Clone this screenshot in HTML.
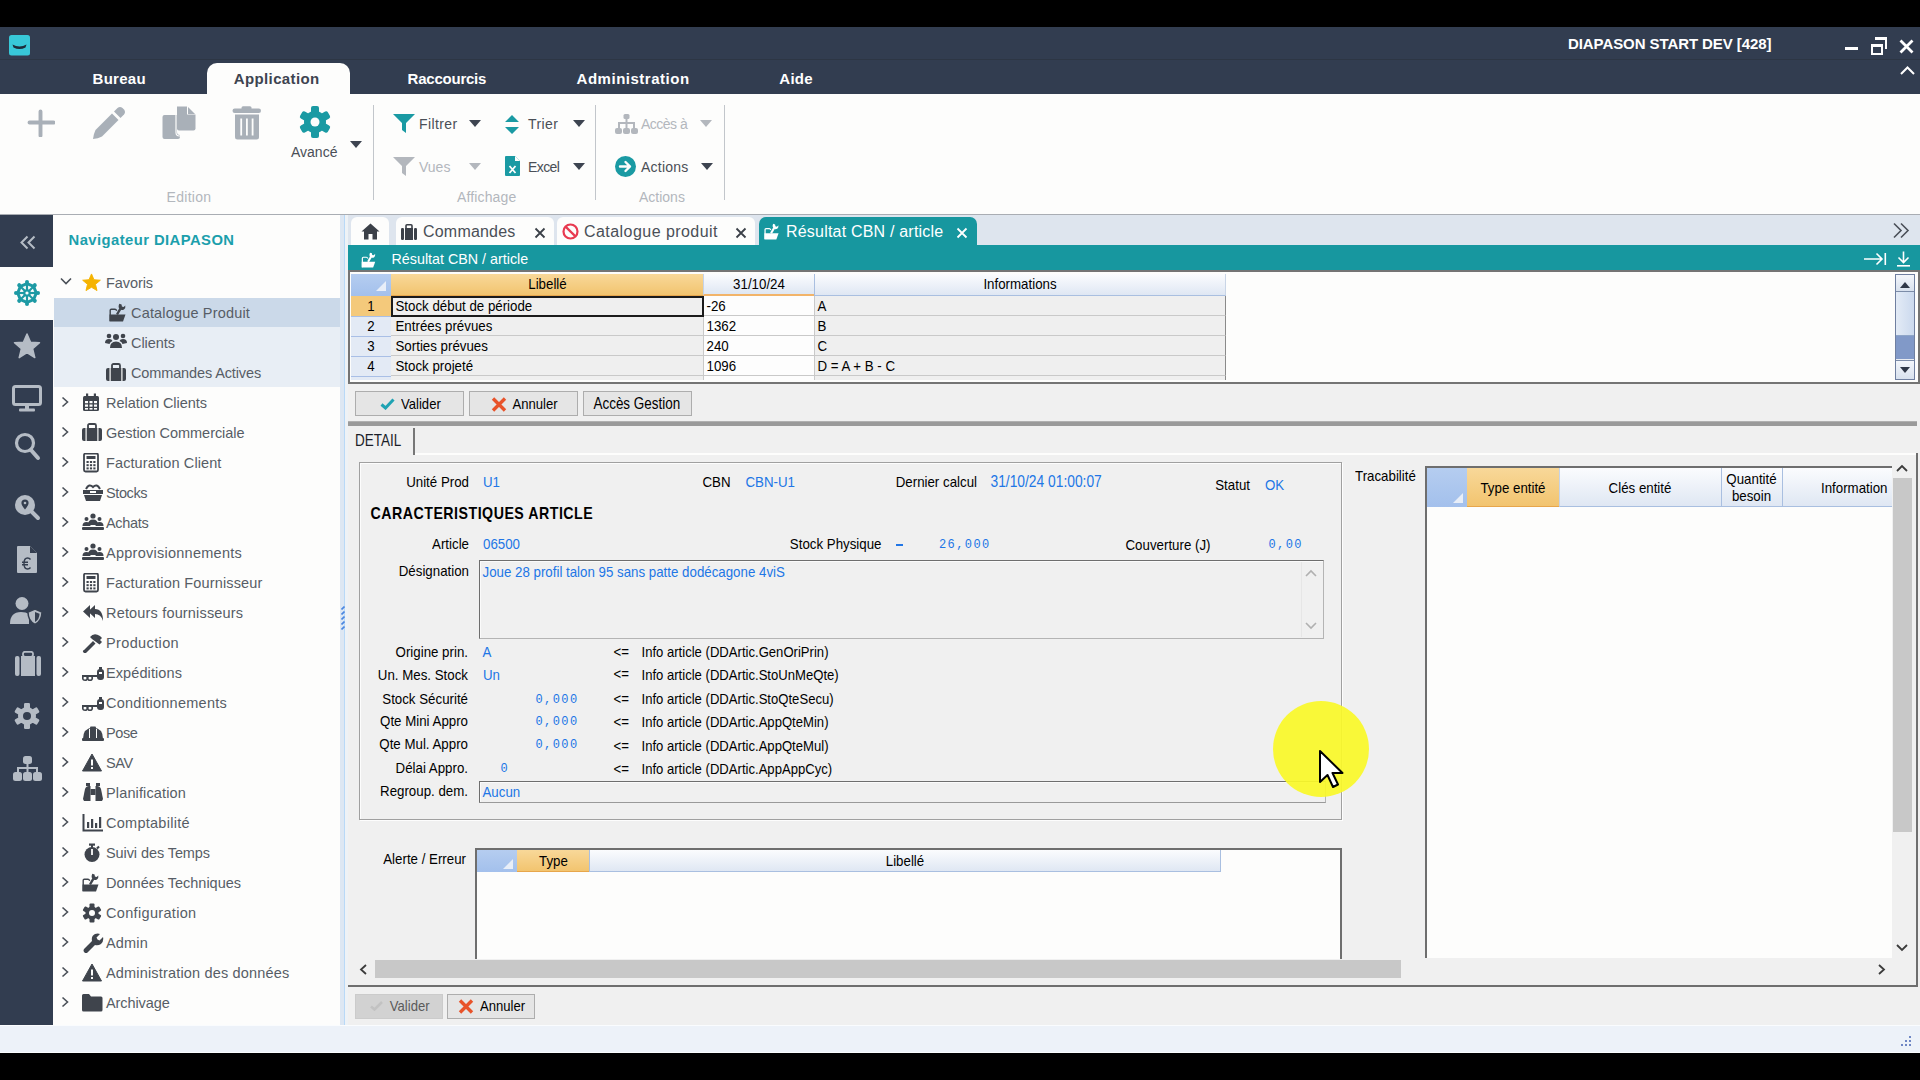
<!DOCTYPE html>
<html><head><meta charset="utf-8">
<style>
*{margin:0;padding:0;box-sizing:border-box}
html,body{width:1920px;height:1080px;overflow:hidden;background:#000;font-family:"Liberation Sans",sans-serif;position:relative}
.a{position:absolute}
.t{position:absolute;white-space:nowrap;line-height:1}
#title{left:0;top:27px;width:1920px;height:33px;background:#323d50;border-bottom:1px solid #2d3644}
#menu{left:0;top:60px;width:1920px;height:34px;background:#323d50}
.mt{color:#fff;font-weight:bold;font-size:15px;top:70.8px}
#ribbon{left:0;top:94px;width:1920px;height:120px;background:#fdfdfc}
.rb{color:#4a4f57;font-size:14px}
.rg{color:#b3b7bd;font-size:14px}
#sep1{left:0;top:214px;width:1920px;height:1px;background:#a9adb3}
#lbar{left:0;top:215px;width:53px;height:810px;background:#323d50}
#side{left:53px;top:215px;width:287px;height:810px;background:#fdfdfc}
#splitter{left:340px;top:215px;width:8px;height:810px;background:linear-gradient(90deg,#dde7f3 0,#dde7f3 4px,#b9d9f7 4px,#b9d9f7 5px,#eef2f6 5px)}
#status{left:0;top:1025px;width:1920px;height:28px;background:#edf2f9;border-top:1px solid #fafcfe;border-bottom:1px solid #fafcfe}
#bottom{left:0;top:1053px;width:1920px;height:27px;background:#000}
.si{color:#575d66;font-size:14.5px}
</style></head><body>
<div class="a" id="title"></div>
<svg class="a" style="left:9px;top:35px" width="21" height="21" viewBox="0 0 21 21"><rect x="0" y="0" width="21" height="20.5" rx="2.5" fill="#38c8d8"/><path d="M3.5 9.5 Q10.5 13.5 17.5 9.5 L16.5 12.5 Q10.5 15.5 4.5 12.5z" fill="#1d2c3a"/></svg>

<div class="t" style="left:1568px;top:35.5px;color:#fff;font-weight:bold;font-size:15px;letter-spacing:-0.08px">DIAPASON START DEV [428]</div>
<div class="a" id="menu"></div>
<div class="a" style="left:1845px;top:47px;width:13px;height:3px;background:#fff"></div>
<div class="a" style="left:1875px;top:37px;width:12px;height:12px;border-top:3px solid #fff;border-right:2px solid #fff"></div>
<div class="a" style="left:1871px;top:44px;width:12px;height:11px;border:2px solid #fff;border-top-width:3px;background:#323d50"></div>
<svg class="a" style="left:1899px;top:39px" width="15" height="15"><path d="M1.5 1.5L13.5 13.5M13.5 1.5L1.5 13.5" stroke="#fff" stroke-width="2.8"/></svg>
<svg class="a" style="left:1900px;top:65px" width="15" height="10"><path d="M1 9L7.5 2.5 14 9" stroke="#fff" stroke-width="2" fill="none"/></svg>

<div class="a" style="left:207px;top:63px;width:143px;height:31px;background:#fdfdfc;border-radius:10px 10px 0 0"></div>
<div class="t mt" style="left:92.5px;letter-spacing:0.3px">Bureau</div>
<div class="t mt" style="left:233.7px;color:#3d4450;letter-spacing:0.39px">Application</div>
<div class="t mt" style="left:407.6px;letter-spacing:-0.23px">Raccourcis</div>
<div class="t mt" style="left:576.6px;letter-spacing:0.51px">Administration</div>
<div class="t mt" style="left:779.3px;letter-spacing:0.27px">Aide</div>
<div class="a" id="ribbon"></div>

<!-- ribbon icons -->
<svg class="a" style="left:27px;top:109px" width="28" height="28" viewBox="0 0 28 28"><path d="M13.5 2.5v24M2.5 13.5h24" stroke="#a9b0b8" stroke-width="3.9" stroke-linecap="round"/></svg>
<svg class="a" style="left:92px;top:105px" width="34" height="35" viewBox="0 0 34 35"><path d="M3.5 25 L20 8.5 L26.5 15 L10 31.5 Q6 33.5 1 34 Q1.5 29 3.5 25Z" fill="#a9b0b8"/><path d="M22 6.5 L25.5 3 Q28 1 30.5 3 L32 4.5 Q34 7 32 9.5 L28.5 13 Z" fill="#a9b0b8"/></svg>
<svg class="a" style="left:162px;top:106px" width="34" height="34" viewBox="0 0 34 34"><path d="M0.5 11 Q0.5 9 2.5 9 H15 V26 Q15 29 18 29 V31 Q18 33 16 33 H2.5 Q0.5 33 0.5 31Z" fill="#a9b0b8"/><path d="M15 0.5 H25.5 L33.5 8 V22.5 Q33.5 24.5 31.5 24.5 H17 Q15 24.5 15 22.5 Z" fill="#a9b0b8"/><path d="M25 0 V8.5 H34 V0z" fill="#fdfdfc"/><path d="M26 1 L33 8 H26z" fill="#a9b0b8"/><path d="M14 9 V26.5 Q14 30 17.5 30 H18" fill="none" stroke="#fdfdfc" stroke-width="1.2"/></svg>
<svg class="a" style="left:232px;top:106px" width="30" height="34" viewBox="0 0 30 34"><rect x="0.5" y="2.5" width="28.5" height="4.5" rx="2.2" fill="#a9b0b8"/><rect x="9.5" y="0.3" width="10" height="4" rx="1.5" fill="#a9b0b8"/><path d="M3 8.5h24v22.5a2.5 2.5 0 0 1-2.5 2.5H5.5A2.5 2.5 0 0 1 3 31z" fill="#a9b0b8"/><rect x="8.3" y="12.5" width="1.8" height="17" fill="#fdfdfc"/><rect x="14" y="12.5" width="1.8" height="17" fill="#fdfdfc"/><rect x="19.7" y="12.5" width="1.8" height="17" fill="#fdfdfc"/></svg>
<svg class="a" style="left:298px;top:105px" width="34" height="34" viewBox="0 0 34 34"><g fill="#1a9aa3"><circle cx="17" cy="17" r="11"/><rect x="13" y="1" width="8" height="8" rx="2"/><rect x="13" y="25" width="8" height="8" rx="2"/><rect x="13" y="1" width="8" height="8" rx="2" transform="rotate(60 17 17)"/><rect x="13" y="1" width="8" height="8" rx="2" transform="rotate(120 17 17)"/><rect x="13" y="1" width="8" height="8" rx="2" transform="rotate(240 17 17)"/><rect x="13" y="1" width="8" height="8" rx="2" transform="rotate(300 17 17)"/></g><circle cx="17" cy="17" r="4.5" fill="#fdfdfc"/></svg>
<div class="t rb" style="left:291px;top:145px">Avancé</div>
<svg class="a" style="left:350px;top:141px" width="12" height="8"><path d="M0 0h12L6 7z" fill="#3d4450"/></svg>
<div class="a" style="left:373px;top:105px;width:1px;height:95px;background:#c2c6cb"></div>
<div class="t rg" style="left:166.5px;top:190px;letter-spacing:0.3px">Edition</div>

<svg class="a" style="left:393px;top:114px" width="22" height="19" viewBox="0 0 22 19"><path d="M0 0h22L13 9v10l-4-3V9z" fill="#1a9aa3"/></svg>
<div class="t rb" style="left:419px;top:116.5px;letter-spacing:0.4px">Filtrer</div>
<svg class="a" style="left:469px;top:120px" width="12" height="8"><path d="M0 0h12L6 7z" fill="#3d4450"/></svg>
<svg class="a" style="left:504px;top:115px" width="16" height="19" viewBox="0 0 16 19"><path d="M8 0L15 7H1z M8 19L15 12H1z" fill="#1a9aa3"/></svg>
<div class="t rb" style="left:528px;top:116.5px;letter-spacing:0.39px">Trier</div>
<svg class="a" style="left:573px;top:120px" width="12" height="8"><path d="M0 0h12L6 7z" fill="#3d4450"/></svg>
<div class="a" style="left:595px;top:105px;width:1px;height:95px;background:#c2c6cb"></div>
<svg class="a" style="left:615px;top:114px" width="23" height="20" viewBox="0 0 23 20"><g fill="#b3b7bd"><rect x="8.5" y="0" width="6" height="5" rx="1.5"/><rect x="10.5" y="5" width="2" height="4"/><rect x="3" y="8" width="17" height="2"/><rect x="3" y="9" width="2" height="5"/><rect x="18" y="9" width="2" height="5"/><rect x="10.5" y="9" width="2" height="5"/><rect x="0" y="14" width="7" height="6" rx="2"/><rect x="8" y="14" width="7" height="6" rx="2"/><rect x="16" y="14" width="7" height="6" rx="2"/></g></svg>
<div class="t rg" style="left:641px;top:116.5px;letter-spacing:-0.5px">Accès à</div>
<svg class="a" style="left:700px;top:120px" width="12" height="8"><path d="M0 0h12L6 7z" fill="#b3b7bd"/></svg>

<svg class="a" style="left:393px;top:157px" width="22" height="19" viewBox="0 0 22 19"><path d="M0 0h22L13 9v10l-4-3V9z" fill="#b3b7bd"/></svg>
<div class="t rg" style="left:419px;top:159.5px">Vues</div>
<svg class="a" style="left:469px;top:163px" width="12" height="8"><path d="M0 0h12L6 7z" fill="#b3b7bd"/></svg>
<svg class="a" style="left:505px;top:156px" width="15" height="20" viewBox="0 0 15 20"><path d="M0 1a1 1 0 0 1 1-1h9l5 5v14a1 1 0 0 1-1 1H1a1 1 0 0 1-1-1z" fill="#1a9aa3"/><path d="M10 0v5h5" fill="#fdfdfc"/><path d="M4.5 10l6 7M10.5 10l-6 7" stroke="#fdfdfc" stroke-width="1.8"/></svg>
<div class="t rb" style="left:528px;top:159.5px;letter-spacing:-0.6px">Excel</div>
<svg class="a" style="left:573px;top:163px" width="12" height="8"><path d="M0 0h12L6 7z" fill="#3d4450"/></svg>
<svg class="a" style="left:615px;top:156px" width="21" height="21" viewBox="0 0 21 21"><circle cx="10.5" cy="10.5" r="10.5" fill="#1a9aa3"/><path d="M5 10.5h10M10.5 6l4.5 4.5-4.5 4.5" stroke="#fdfdfc" stroke-width="2.4" fill="none" stroke-linecap="round" stroke-linejoin="round"/></svg>
<div class="t rb" style="left:641px;top:159.5px;letter-spacing:0.23px">Actions</div>
<svg class="a" style="left:701px;top:163px" width="12" height="8"><path d="M0 0h12L6 7z" fill="#3d4450"/></svg>
<div class="a" style="left:724px;top:105px;width:1px;height:95px;background:#c2c6cb"></div>
<div class="t rg" style="left:457px;top:190px;letter-spacing:0.14px">Affichage</div>
<div class="t rg" style="left:639px;top:190px">Actions</div>
<div class="a" id="sep1"></div>
<div class="a" id="lbar"></div>
<!--LBAR--><div class="a" style="left:0;top:267px;width:53px;height:53px;background:#fdfdfc"></div>
<svg class="a" style="left:19px;top:235px" width="18" height="15" viewBox="0 0 18 15"><path d="M8.5 1.5L2.5 7.5 8.5 13.5M15.5 1.5L9.5 7.5 15.5 13.5" stroke="#b5bcc5" stroke-width="2" fill="none"/></svg>
<svg class="a" style="left:14px;top:280px" width="26" height="26" viewBox="0 0 26 26"><g fill="#1d9aa4"><rect x="11.9" y="2" width="2.2" height="22" transform="rotate(0 13 13)"/><rect x="11.9" y="2" width="2.2" height="22" transform="rotate(45 13 13)"/><rect x="11.9" y="2" width="2.2" height="22" transform="rotate(90 13 13)"/><rect x="11.9" y="2" width="2.2" height="22" transform="rotate(135 13 13)"/><circle cx="13" cy="2" r="2" transform="rotate(0 13 13)"/><circle cx="13" cy="2" r="2" transform="rotate(45 13 13)"/><circle cx="13" cy="2" r="2" transform="rotate(90 13 13)"/><circle cx="13" cy="2" r="2" transform="rotate(135 13 13)"/><circle cx="13" cy="2" r="2" transform="rotate(180 13 13)"/><circle cx="13" cy="2" r="2" transform="rotate(225 13 13)"/><circle cx="13" cy="2" r="2" transform="rotate(270 13 13)"/><circle cx="13" cy="2" r="2" transform="rotate(315 13 13)"/></g><polygon points="13.00,3.70 19.58,6.42 22.30,13.00 19.58,19.58 13.00,22.30 6.42,19.58 3.70,13.00 6.42,6.42" fill="none" stroke="#1d9aa4" stroke-width="3" stroke-linejoin="round"/><circle cx="13" cy="13" r="3.8" fill="#1d9aa4"/><circle cx="13" cy="13" r="1.6" fill="#fdfdfc"/></svg>
<svg class="a" style="left:13px;top:333px" width="28" height="26" viewBox="0 0 28 26"><path d="M14 1 L17.6 9.2 L26.5 9.8 L19.6 15.6 L21.8 24.6 L14 19.7 L6.2 24.6 L8.4 15.6 L1.5 9.8 L10.4 9.2z" fill="#b5bcc5" stroke="#b5bcc5" stroke-width="1.5" stroke-linejoin="round"/></svg>
<svg class="a" style="left:12px;top:385px" width="30" height="27" viewBox="0 0 30 27"><rect x="1.5" y="1.5" width="27" height="18" rx="2" fill="none" stroke="#b5bcc5" stroke-width="3"/><rect x="13" y="20" width="4" height="4" fill="#b5bcc5"/><rect x="7" y="23.5" width="16" height="3" rx="1" fill="#b5bcc5"/></svg>
<svg class="a" style="left:14px;top:431px" width="27" height="32" viewBox="0 0 27 32"><circle cx="11" cy="12" r="8.5" fill="none" stroke="#b5bcc5" stroke-width="3.2"/><path d="M17 19 L24 27" stroke="#b5bcc5" stroke-width="4" stroke-linecap="round"/></svg>
<svg class="a" style="left:14px;top:494px" width="27" height="27" viewBox="0 0 27 27"><circle cx="11" cy="11" r="10" fill="#b5bcc5"/><path d="M17.5 17.5 L24 24" stroke="#b5bcc5" stroke-width="4" stroke-linecap="round"/><path d="M11 5.5 a3.6 3.6 0 0 1 3.6 3.6 Q14.6 11.5 11 15.5 Q7.4 11.5 7.4 9.1 a3.6 3.6 0 0 1 3.6-3.6z" fill="#343e4f"/><circle cx="11" cy="9" r="1.3" fill="#b5bcc5"/></svg>
<svg class="a" style="left:17px;top:546px" width="20" height="27" viewBox="0 0 20 27"><path d="M0 1 Q0 0 1 0 H13 L20 7 V26 Q20 27 19 27 H1 Q0 27 0 26z" fill="#b5bcc5"/><path d="M13 0 V7 H20" fill="#343e4f"/><path d="M13.5 13.5 Q12.5 12 10.5 12 Q7 12 7 17.5 Q7 23 10.5 23 Q12.5 23 13.5 21.5 M5 16.2 H11 M5 18.8 H11" stroke="#343e4f" stroke-width="1.4" fill="none"/></svg>
<svg class="a" style="left:10px;top:597px" width="33" height="28" viewBox="0 0 33 28"><circle cx="12" cy="6.5" r="6.5" fill="#b5bcc5"/><path d="M0 27 Q0 15 11 15 Q16 15 19 17 V27z" fill="#b5bcc5"/><path d="M25 12 L32 15 Q32 24 25 27.5 Q18 24 18 15z" fill="#b5bcc5" stroke="#343e4f" stroke-width="1.5"/><path d="M25 15 L29.5 16.8 Q29.5 22.5 25 25z" fill="#343e4f"/></svg>
<svg class="a" style="left:15px;top:651px" width="26" height="25" viewBox="0 0 26 25"><rect x="0" y="5" width="4.5" height="20" rx="2" fill="#b5bcc5"/><rect x="21.5" y="5" width="4.5" height="20" rx="2" fill="#b5bcc5"/><rect x="6" y="5" width="14" height="20" fill="#b5bcc5"/><rect x="8" y="0.8" width="10" height="5" rx="2" fill="none" stroke="#b5bcc5" stroke-width="1.8"/></svg>
<svg class="a" style="left:14px;top:703px" width="26" height="26" viewBox="0 0 26 26"><g fill="#b5bcc5"><circle cx="13" cy="13" r="9"/><rect x="10" y="0" width="6" height="6" rx="1.2" transform="rotate(0 13 13)"/><rect x="10" y="0" width="6" height="6" rx="1.2" transform="rotate(60 13 13)"/><rect x="10" y="0" width="6" height="6" rx="1.2" transform="rotate(120 13 13)"/><rect x="10" y="0" width="6" height="6" rx="1.2" transform="rotate(180 13 13)"/><rect x="10" y="0" width="6" height="6" rx="1.2" transform="rotate(240 13 13)"/><rect x="10" y="0" width="6" height="6" rx="1.2" transform="rotate(300 13 13)"/></g><circle cx="13" cy="13" r="4" fill="#343e4f"/></svg>
<svg class="a" style="left:13px;top:756px" width="29" height="25" viewBox="0 0 29 25"><g fill="#b5bcc5"><rect x="10" y="0" width="9" height="8" rx="2.5"/><rect x="13.5" y="7" width="2" height="5"/><rect x="4" y="11" width="21" height="2"/><rect x="4" y="11" width="2" height="6"/><rect x="23" y="11" width="2" height="6"/><rect x="13.5" y="11" width="2" height="6"/><rect x="0" y="16" width="9" height="9" rx="2.5"/><rect x="10" y="16" width="9" height="9" rx="2.5"/><rect x="20" y="16" width="9" height="9" rx="2.5"/></g></svg><!--/LBAR-->
<div class="a" id="side"></div>
<!--SIDE--><div class="t" style="left:68.5px;top:233.2px;color:#1b9fac;font-weight:bold;font-size:14.8px;letter-spacing:0.44px">Navigateur DIAPASON</div>
<svg class="a" style="left:60px;top:277px" width="12" height="8"><path d="M1 1.5L6 6.5 11 1.5" stroke="#4a5058" stroke-width="1.6" fill="none"/></svg>
<svg class="a" style="left:82px;top:273px" width="19" height="19" viewBox="0 0 20 19"><path d="M10 0.5 L12.6 6.6 L19.3 7.1 L14.2 11.4 L15.8 18 L10 14.5 L4.2 18 L5.8 11.4 L0.7 7.1 L7.4 6.6z" fill="#f5b300" stroke="#f5b300" stroke-width="1" stroke-linejoin="round"/></svg>
<div class="t si" style="left:106px;top:275.6px;letter-spacing:-0.077px">Favoris</div>
<div class="a" style="left:54px;top:298px;width:286px;height:29px;background:#cbd9e9"></div>
<div class="a" style="left:54px;top:327px;width:286px;height:60px;background:#e8eef5"></div>
<svg class="a" style="left:109px;top:303px" width="17" height="19" viewBox="0 0 17 19"><path d="M1.2 18 V7.3 Q1.2 6.2 2.3 6.2 H6 Q7 6.2 7.8 7.8" fill="none" stroke="#3f444c" stroke-width="1.4"/><path d="M0.5 11.5 H16.5 L14 18.5 H0.5 Z" fill="#3f444c"/><path d="M8 11.5 L11.3 5.8" stroke="#3f444c" stroke-width="2.4"/><path d="M10.3 0.8 Q8.8 4 10.6 6.2 Q12.6 7.6 15 6.4 Q16.8 5 16.3 2.5 L14.6 4 L12.9 3.5 L12.6 1.6 Z" fill="#3f444c"/></svg>
<div class="t si" style="left:131px;top:305.6px;letter-spacing:0.172px">Catalogue Produit</div>
<svg class="a" style="left:105px;top:333px" width="22" height="16" viewBox="0 0 22 16"><g fill="#3f444c"><circle cx="11" cy="4" r="3"/><path d="M5 15 Q5 8.5 11 8.5 Q17 8.5 17 15z"/><circle cx="4" cy="3" r="2.3"/><path d="M0 10 Q0 6 4 6 Q7 6 7.5 8 Q5 9 4.5 11z"/><circle cx="18" cy="3" r="2.3"/><path d="M22 10 Q22 6 18 6 Q15 6 14.5 8 Q17 9 17.5 11z"/></g></svg>
<div class="t si" style="left:131px;top:335.6px;letter-spacing:-0.046px">Clients</div>
<svg class="a" style="left:106px;top:363px" width="20" height="19" viewBox="0 0 20 19"><rect x="0" y="5" width="20" height="13" rx="2" fill="#3f444c"/><rect x="6" y="1" width="8" height="5" rx="1.5" fill="none" stroke="#3f444c" stroke-width="1.8"/><rect x="3.5" y="5" width="1.2" height="13" fill="#fdfdfc"/><rect x="15.3" y="5" width="1.2" height="13" fill="#fdfdfc"/></svg>
<div class="t si" style="left:131px;top:365.6px;letter-spacing:-0.127px">Commandes Actives</div>
<svg class="a" style="left:61px;top:396px" width="9" height="12"><path d="M1.5 1.5L6.5 6 1.5 10.5" stroke="#4a5058" stroke-width="1.6" fill="none"/></svg>
<svg class="a" style="left:82px;top:393px" width="22" height="20" viewBox="0 0 22 20"><rect x="1" y="3" width="16" height="15" rx="1.5" fill="#3f444c"/><rect x="4" y="0.5" width="2.2" height="4" fill="#3f444c"/><rect x="11.8" y="0.5" width="2.2" height="4" fill="#3f444c"/><g fill="#fdfdfc"><rect x="3" y="8" width="3" height="2.2"/><rect x="7.5" y="8" width="3" height="2.2"/><rect x="12" y="8" width="3" height="2.2"/><rect x="3" y="11.5" width="3" height="2.2"/><rect x="7.5" y="11.5" width="3" height="2.2"/><rect x="12" y="11.5" width="3" height="2.2"/><rect x="3" y="15" width="3" height="1.6"/><rect x="7.5" y="15" width="3" height="1.6"/><rect x="12" y="15" width="3" height="1.6"/></g></svg>
<div class="t si" style="left:106px;top:395.6px;letter-spacing:-0.034px">Relation Clients</div>
<svg class="a" style="left:61px;top:426px" width="9" height="12"><path d="M1.5 1.5L6.5 6 1.5 10.5" stroke="#4a5058" stroke-width="1.6" fill="none"/></svg>
<svg class="a" style="left:82px;top:423px" width="22" height="20" viewBox="0 0 22 20"><rect x="0" y="5" width="20" height="13" rx="2" fill="#3f444c"/><rect x="6" y="1" width="8" height="5" rx="1.5" fill="none" stroke="#3f444c" stroke-width="1.8"/><rect x="3.5" y="5" width="1.2" height="13" fill="#fdfdfc"/><rect x="15.3" y="5" width="1.2" height="13" fill="#fdfdfc"/></svg>
<div class="t si" style="left:106px;top:425.6px;letter-spacing:-0.048px">Gestion Commerciale</div>
<svg class="a" style="left:61px;top:456px" width="9" height="12"><path d="M1.5 1.5L6.5 6 1.5 10.5" stroke="#4a5058" stroke-width="1.6" fill="none"/></svg>
<svg class="a" style="left:82px;top:453px" width="22" height="20" viewBox="0 0 22 20"><rect x="2" y="0.5" width="14" height="18" rx="1.5" fill="none" stroke="#3f444c" stroke-width="1.8"/><rect x="4.5" y="3" width="9" height="3" fill="#3f444c"/><g fill="#3f444c"><rect x="4.5" y="8" width="2.2" height="2"/><rect x="7.9" y="8" width="2.2" height="2"/><rect x="11.3" y="8" width="2.2" height="2"/><rect x="4.5" y="11.2" width="2.2" height="2"/><rect x="7.9" y="11.2" width="2.2" height="2"/><rect x="11.3" y="11.2" width="2.2" height="2"/><rect x="4.5" y="14.4" width="2.2" height="2"/><rect x="7.9" y="14.4" width="2.2" height="2"/><rect x="11.3" y="14.4" width="2.2" height="2"/></g></svg>
<div class="t si" style="left:106px;top:455.6px;letter-spacing:0.104px">Facturation Client</div>
<svg class="a" style="left:61px;top:486px" width="9" height="12"><path d="M1.5 1.5L6.5 6 1.5 10.5" stroke="#4a5058" stroke-width="1.6" fill="none"/></svg>
<svg class="a" style="left:82px;top:483px" width="22" height="20" viewBox="0 0 22 20"><path d="M1 7h20v4H1z M2 12h18l-2 6H4z" fill="#3f444c"/><path d="M4 6 Q7 0 11 4 Q15 0 18 6" fill="none" stroke="#3f444c" stroke-width="2"/><rect x="8" y="8" width="6" height="2" fill="#fdfdfc"/></svg>
<div class="t si" style="left:106px;top:485.6px;letter-spacing:-0.4px">Stocks</div>
<svg class="a" style="left:61px;top:516px" width="9" height="12"><path d="M1.5 1.5L6.5 6 1.5 10.5" stroke="#4a5058" stroke-width="1.6" fill="none"/></svg>
<svg class="a" style="left:82px;top:513px" width="22" height="20" viewBox="0 0 22 20"><g fill="#3f444c"><circle cx="11" cy="3" r="2.6"/><path d="M6 12 Q6 6.5 11 6.5 Q16 6.5 16 12z"/><circle cx="4.5" cy="6" r="2"/><path d="M0.5 13 Q0.5 9 4.5 9 Q8.5 9 8.5 13z"/><circle cx="17.5" cy="6" r="2"/><path d="M13.5 13 Q13.5 9 17.5 9 Q21.5 9 21.5 13z"/><rect x="0" y="14" width="22" height="3" rx="1"/></g></svg>
<div class="t si" style="left:106px;top:515.6px;letter-spacing:-0.305px">Achats</div>
<svg class="a" style="left:61px;top:546px" width="9" height="12"><path d="M1.5 1.5L6.5 6 1.5 10.5" stroke="#4a5058" stroke-width="1.6" fill="none"/></svg>
<svg class="a" style="left:82px;top:543px" width="22" height="20" viewBox="0 0 22 20"><g fill="#3f444c"><circle cx="11" cy="3" r="2.6"/><path d="M6 12 Q6 6.5 11 6.5 Q16 6.5 16 12z"/><circle cx="4.5" cy="6" r="2"/><path d="M0.5 13 Q0.5 9 4.5 9 Q8.5 9 8.5 13z"/><circle cx="17.5" cy="6" r="2"/><path d="M13.5 13 Q13.5 9 17.5 9 Q21.5 9 21.5 13z"/><rect x="0" y="14" width="22" height="3" rx="1"/></g></svg>
<div class="t si" style="left:106px;top:545.6px;letter-spacing:0.257px">Approvisionnements</div>
<svg class="a" style="left:61px;top:576px" width="9" height="12"><path d="M1.5 1.5L6.5 6 1.5 10.5" stroke="#4a5058" stroke-width="1.6" fill="none"/></svg>
<svg class="a" style="left:82px;top:573px" width="22" height="20" viewBox="0 0 22 20"><rect x="2" y="0.5" width="14" height="18" rx="1.5" fill="none" stroke="#3f444c" stroke-width="1.8"/><rect x="4.5" y="3" width="9" height="3" fill="#3f444c"/><g fill="#3f444c"><rect x="4.5" y="8" width="2.2" height="2"/><rect x="7.9" y="8" width="2.2" height="2"/><rect x="11.3" y="8" width="2.2" height="2"/><rect x="4.5" y="11.2" width="2.2" height="2"/><rect x="7.9" y="11.2" width="2.2" height="2"/><rect x="11.3" y="11.2" width="2.2" height="2"/><rect x="4.5" y="14.4" width="2.2" height="2"/><rect x="7.9" y="14.4" width="2.2" height="2"/><rect x="11.3" y="14.4" width="2.2" height="2"/></g></svg>
<div class="t si" style="left:106px;top:575.6px;letter-spacing:0.147px">Facturation Fournisseur</div>
<svg class="a" style="left:61px;top:606px" width="9" height="12"><path d="M1.5 1.5L6.5 6 1.5 10.5" stroke="#4a5058" stroke-width="1.6" fill="none"/></svg>
<svg class="a" style="left:82px;top:603px" width="22" height="20" viewBox="0 0 22 20"><path d="M8 2 L1 8.5 L8 15 Z" fill="#3f444c"/><path d="M13 2 L6 8.5 L13 15 V11 Q19 11 21 18 Q21 6 13 6z" fill="#3f444c"/><path d="M8 2 L1 8.5 L8 15" fill="none" stroke="#fdfdfc" stroke-width="0"/></svg>
<div class="t si" style="left:106px;top:605.6px;letter-spacing:0.174px">Retours fournisseurs</div>
<svg class="a" style="left:61px;top:636px" width="9" height="12"><path d="M1.5 1.5L6.5 6 1.5 10.5" stroke="#4a5058" stroke-width="1.6" fill="none"/></svg>
<svg class="a" style="left:82px;top:633px" width="22" height="20" viewBox="0 0 22 20"><path d="M2 17 L11 8 L13.5 10.5 L4.5 19.5 Q3 21 1.5 19.5 Q0 18 2 17z" fill="#3f444c"/><path d="M8 4 Q12 -1 18 3 L20 5 L18 7 L20 9 L17.5 11.5 L10 6z" fill="#3f444c"/></svg>
<div class="t si" style="left:106px;top:635.6px;letter-spacing:0.368px">Production</div>
<svg class="a" style="left:61px;top:666px" width="9" height="12"><path d="M1.5 1.5L6.5 6 1.5 10.5" stroke="#4a5058" stroke-width="1.6" fill="none"/></svg>
<svg class="a" style="left:82px;top:663px" width="22" height="20" viewBox="0 0 22 20"><g fill="#3f444c"><rect x="0" y="12" width="18" height="2"/><circle cx="3" cy="15" r="2.3" fill="none" stroke="#3f444c" stroke-width="1.6"/><circle cx="8" cy="15" r="2.3" fill="none" stroke="#3f444c" stroke-width="1.6"/><rect x="15" y="6" width="7" height="11" rx="3"/><rect x="17" y="4" width="3" height="3"/></g><rect x="17" y="9" width="3" height="2" fill="#fdfdfc"/></svg>
<div class="t si" style="left:106px;top:665.6px;letter-spacing:0.094px">Expéditions</div>
<svg class="a" style="left:61px;top:696px" width="9" height="12"><path d="M1.5 1.5L6.5 6 1.5 10.5" stroke="#4a5058" stroke-width="1.6" fill="none"/></svg>
<svg class="a" style="left:82px;top:693px" width="22" height="20" viewBox="0 0 22 20"><g fill="#3f444c"><rect x="0" y="12" width="18" height="2"/><circle cx="3" cy="15" r="2.3" fill="none" stroke="#3f444c" stroke-width="1.6"/><circle cx="8" cy="15" r="2.3" fill="none" stroke="#3f444c" stroke-width="1.6"/><rect x="15" y="6" width="7" height="11" rx="3"/><rect x="17" y="4" width="3" height="3"/></g><rect x="17" y="9" width="3" height="2" fill="#fdfdfc"/></svg>
<div class="t si" style="left:106px;top:695.6px;letter-spacing:0.258px">Conditionnements</div>
<svg class="a" style="left:61px;top:726px" width="9" height="12"><path d="M1.5 1.5L6.5 6 1.5 10.5" stroke="#4a5058" stroke-width="1.6" fill="none"/></svg>
<svg class="a" style="left:82px;top:723px" width="22" height="20" viewBox="0 0 22 20"><path d="M1 16 Q1 5 11 4.5 Q21 5 21 16z" fill="#3f444c"/><rect x="0" y="15" width="22" height="3" rx="1" fill="#3f444c"/><rect x="8" y="3.5" width="6" height="6" rx="1" fill="#3f444c"/><rect x="7" y="6" width="1" height="9" fill="#fdfdfc"/><rect x="14" y="6" width="1" height="9" fill="#fdfdfc"/></svg>
<div class="t si" style="left:106px;top:725.6px;letter-spacing:-0.4px">Pose</div>
<svg class="a" style="left:61px;top:756px" width="9" height="12"><path d="M1.5 1.5L6.5 6 1.5 10.5" stroke="#4a5058" stroke-width="1.6" fill="none"/></svg>
<svg class="a" style="left:82px;top:753px" width="22" height="20" viewBox="0 0 22 20"><path d="M10 1 L19.5 18 H0.5z" fill="#3f444c" stroke="#3f444c" stroke-width="1" stroke-linejoin="round"/><rect x="9" y="6.5" width="2" height="6" fill="#fdfdfc"/><rect x="9" y="14" width="2" height="2" fill="#fdfdfc"/></svg>
<div class="t si" style="left:106px;top:755.6px;letter-spacing:-0.4px">SAV</div>
<svg class="a" style="left:61px;top:786px" width="9" height="12"><path d="M1.5 1.5L6.5 6 1.5 10.5" stroke="#4a5058" stroke-width="1.6" fill="none"/></svg>
<svg class="a" style="left:82px;top:783px" width="22" height="20" viewBox="0 0 22 20"><g fill="#3f444c"><path d="M1 16 L3 6 Q4 3 7 3 L8.5 3 L8.5 18 H2z"/><path d="M21 16 L19 6 Q18 3 15 3 L13.5 3 L13.5 18 H20z"/><rect x="8.5" y="6" width="5" height="6"/><rect x="4" y="0" width="4" height="3"/><rect x="14" y="0" width="4" height="3"/></g></svg>
<div class="t si" style="left:106px;top:785.6px;letter-spacing:0.14px">Planification</div>
<svg class="a" style="left:61px;top:816px" width="9" height="12"><path d="M1.5 1.5L6.5 6 1.5 10.5" stroke="#4a5058" stroke-width="1.6" fill="none"/></svg>
<svg class="a" style="left:82px;top:813px" width="22" height="20" viewBox="0 0 22 20"><path d="M1.5 1 V17.5 H21" fill="none" stroke="#3f444c" stroke-width="2"/><g fill="#3f444c"><rect x="5" y="9" width="2.2" height="6"/><rect x="9" y="6" width="2.2" height="9"/><rect x="13" y="10" width="2.2" height="5"/><rect x="17" y="4" width="2.2" height="11"/></g></svg>
<div class="t si" style="left:106px;top:815.6px;letter-spacing:0.267px">Comptabilité</div>
<svg class="a" style="left:61px;top:846px" width="9" height="12"><path d="M1.5 1.5L6.5 6 1.5 10.5" stroke="#4a5058" stroke-width="1.6" fill="none"/></svg>
<svg class="a" style="left:82px;top:843px" width="22" height="20" viewBox="0 0 22 20"><circle cx="10" cy="11.5" r="7.5" fill="#3f444c"/><rect x="7" y="0.5" width="6" height="2.2" fill="#3f444c"/><rect x="9" y="2" width="2" height="3" fill="#3f444c"/><rect x="15" y="3" width="2" height="3" transform="rotate(45 16 4.5)" fill="#3f444c"/><rect x="9.1" y="6" width="1.8" height="6" fill="#fdfdfc"/></svg>
<div class="t si" style="left:106px;top:845.6px;letter-spacing:-0.087px">Suivi des Temps</div>
<svg class="a" style="left:61px;top:876px" width="9" height="12"><path d="M1.5 1.5L6.5 6 1.5 10.5" stroke="#4a5058" stroke-width="1.6" fill="none"/></svg>
<svg class="a" style="left:82px;top:873px" width="17" height="19" viewBox="0 0 17 19"><path d="M1.2 18 V7.3 Q1.2 6.2 2.3 6.2 H6 Q7 6.2 7.8 7.8" fill="none" stroke="#3f444c" stroke-width="1.4"/><path d="M0.5 11.5 H16.5 L14 18.5 H0.5 Z" fill="#3f444c"/><path d="M8 11.5 L11.3 5.8" stroke="#3f444c" stroke-width="2.4"/><path d="M10.3 0.8 Q8.8 4 10.6 6.2 Q12.6 7.6 15 6.4 Q16.8 5 16.3 2.5 L14.6 4 L12.9 3.5 L12.6 1.6 Z" fill="#3f444c"/></svg>
<div class="t si" style="left:106px;top:875.6px;letter-spacing:-0.009px">Données Techniques</div>
<svg class="a" style="left:61px;top:906px" width="9" height="12"><path d="M1.5 1.5L6.5 6 1.5 10.5" stroke="#4a5058" stroke-width="1.6" fill="none"/></svg>
<svg class="a" style="left:82px;top:903px" width="22" height="20" viewBox="0 0 22 20"><g fill="#3f444c"><circle cx="10" cy="10" r="6.5"/><rect x="7.5" y="0.5" width="5" height="5" rx="1"/><rect x="7.5" y="14.5" width="5" height="5" rx="1"/><rect x="7.5" y="0.5" width="5" height="5" rx="1" transform="rotate(60 10 10)"/><rect x="7.5" y="0.5" width="5" height="5" rx="1" transform="rotate(120 10 10)"/><rect x="7.5" y="0.5" width="5" height="5" rx="1" transform="rotate(240 10 10)"/><rect x="7.5" y="0.5" width="5" height="5" rx="1" transform="rotate(300 10 10)"/></g><circle cx="10" cy="10" r="3" fill="#fdfdfc"/></svg>
<div class="t si" style="left:106px;top:905.6px;letter-spacing:0.327px">Configuration</div>
<svg class="a" style="left:61px;top:936px" width="9" height="12"><path d="M1.5 1.5L6.5 6 1.5 10.5" stroke="#4a5058" stroke-width="1.6" fill="none"/></svg>
<svg class="a" style="left:82px;top:933px" width="22" height="20" viewBox="0 0 22 20"><path d="M2.5 19.5 Q0.5 17.5 2.5 15.5 L10 8 Q9 3 13 1 Q16 0 18 1 L14.5 4.5 L15.5 6.5 L17.5 7.5 L21 4 Q22 8 19 11 Q16 13 13 12 L5.5 19.5 Q4 21 2.5 19.5z" fill="#3f444c"/></svg>
<div class="t si" style="left:106px;top:935.6px;letter-spacing:0.18px">Admin</div>
<svg class="a" style="left:61px;top:966px" width="9" height="12"><path d="M1.5 1.5L6.5 6 1.5 10.5" stroke="#4a5058" stroke-width="1.6" fill="none"/></svg>
<svg class="a" style="left:82px;top:963px" width="22" height="20" viewBox="0 0 22 20"><path d="M10 1 L19.5 18 H0.5z" fill="#3f444c" stroke="#3f444c" stroke-width="1" stroke-linejoin="round"/><rect x="9" y="6.5" width="2" height="6" fill="#fdfdfc"/><rect x="9" y="14" width="2" height="2" fill="#fdfdfc"/></svg>
<div class="t si" style="left:106px;top:965.6px;letter-spacing:0.172px">Administration des données</div>
<svg class="a" style="left:61px;top:996px" width="9" height="12"><path d="M1.5 1.5L6.5 6 1.5 10.5" stroke="#4a5058" stroke-width="1.6" fill="none"/></svg>
<svg class="a" style="left:82px;top:993px" width="22" height="20" viewBox="0 0 22 20"><path d="M0 2.5 Q0 1 1.5 1 H7 L9 3.5 H19 Q20.5 3.5 20.5 5 V17 Q20.5 18.5 19 18.5 H1.5 Q0 18.5 0 17z" fill="#3f444c"/></svg>
<div class="t si" style="left:106px;top:995.6px;letter-spacing:-0.098px">Archivage</div><!--/SIDE-->
<div class="a" id="splitter"></div>
<svg class="a" style="left:341px;top:606px" width="4" height="4"><path d="M0.5 3.5L3.5 0.5" stroke="#4a86e0" stroke-width="1.6"/></svg><svg class="a" style="left:341px;top:611px" width="4" height="4"><path d="M0.5 3.5L3.5 0.5" stroke="#4a86e0" stroke-width="1.6"/></svg><svg class="a" style="left:341px;top:616px" width="4" height="4"><path d="M0.5 3.5L3.5 0.5" stroke="#4a86e0" stroke-width="1.6"/></svg><svg class="a" style="left:341px;top:621px" width="4" height="4"><path d="M0.5 3.5L3.5 0.5" stroke="#4a86e0" stroke-width="1.6"/></svg><svg class="a" style="left:341px;top:626px" width="4" height="4"><path d="M0.5 3.5L3.5 0.5" stroke="#4a86e0" stroke-width="1.6"/></svg>
<!--MAIN--><div class="a" style="left:348px;top:215px;width:1572px;height:810px;background:#f0f0f0"></div>
<div class="a" style="left:348px;top:215px;width:1572px;height:30px;background:#dee5ee"></div>
<div class="a" style="left:351px;top:217px;width:38px;height:28px;background:#fdfdfc;border-radius:6px 6px 0 0"></div>
<svg class="a" style="left:361px;top:223px" width="19" height="17" viewBox="0 0 19 17"><path d="M9.5 0.5 L18.5 8.5 H16 V16.5 H11.5 V11 H7.5 V16.5 H3 V8.5 H0.5z" fill="#3b4048"/></svg>
<div class="a" style="left:396px;top:217px;width:158px;height:28px;background:#fdfdfc;border-radius:6px 6px 0 0"></div>
<svg class="a" style="left:401px;top:224px" width="16" height="16" viewBox="0 0 16 16"><rect x="0" y="4" width="3" height="12" rx="1.2" fill="#3b4048"/><rect x="13" y="4" width="3" height="12" rx="1.2" fill="#3b4048"/><rect x="4" y="4" width="8" height="12" fill="#3b4048"/><rect x="5" y="0.8" width="6" height="4" rx="1" fill="none" stroke="#3b4048" stroke-width="1.6"/></svg>
<div class="t" style="left:423px;top:223.96px;font-size:16px;color:#4a4f57;font-family:'Liberation Sans',sans-serif;letter-spacing:0.2px;">Commandes</div>
<svg class="a" style="left:534px;top:227px" width="12" height="12"><path d="M1.5 1.5L10.5 10.5M10.5 1.5L1.5 10.5" stroke="#3b4048" stroke-width="1.8"/></svg>
<div class="a" style="left:557px;top:217px;width:198px;height:28px;background:#fdfdfc;border-radius:6px 6px 0 0"></div>
<svg class="a" style="left:562px;top:223px" width="17" height="17" viewBox="0 0 17 17"><circle cx="8.5" cy="8.5" r="7" fill="none" stroke="#e83a50" stroke-width="2.2"/><path d="M3.6 3.6 L13.4 13.4" stroke="#e83a50" stroke-width="2.2"/></svg>
<div class="t" style="left:584px;top:223.96px;font-size:16px;color:#4a4f57;font-family:'Liberation Sans',sans-serif;letter-spacing:0.45px;">Catalogue produit</div>
<svg class="a" style="left:735px;top:227px" width="12" height="12"><path d="M1.5 1.5L10.5 10.5M10.5 1.5L1.5 10.5" stroke="#3b4048" stroke-width="1.8"/></svg>
<div class="a" style="left:759px;top:217px;width:218px;height:28px;background:#17979f;border-radius:7px 7px 0 0"></div>
<svg class="a" style="left:764px;top:223px" width="15" height="17" viewBox="0 0 17 19"><path d="M1.2 18 V7.3 Q1.2 6.2 2.3 6.2 H6 Q7 6.2 7.8 7.8" fill="none" stroke="#fff" stroke-width="1.4"/><path d="M0.5 11.5 H16.5 L14 18.5 H0.5 Z" fill="#fff"/><path d="M8 11.5 L11.3 5.8" stroke="#fff" stroke-width="2.4"/><path d="M10.3 0.8 Q8.8 4 10.6 6.2 Q12.6 7.6 15 6.4 Q16.8 5 16.3 2.5 L14.6 4 L12.9 3.5 L12.6 1.6 Z" fill="#fff"/></svg>
<div class="t" style="left:786px;top:223.96px;font-size:16px;color:#fff;font-family:'Liberation Sans',sans-serif;letter-spacing:0.2px;">Résultat CBN / article</div>
<svg class="a" style="left:956px;top:227px" width="12" height="12"><path d="M1.5 1.5L10.5 10.5M10.5 1.5L1.5 10.5" stroke="#fff" stroke-width="1.8"/></svg>
<svg class="a" style="left:1892px;top:222px" width="19" height="17" viewBox="0 0 19 17"><path d="M2 1.5L9 8.5 2 15.5M9 1.5L16 8.5 9 15.5" stroke="#4a5058" stroke-width="1.6" fill="none"/></svg>
<div class="a" style="left:348px;top:245px;width:1572px;height:25px;background:#17979f"></div>
<svg class="a" style="left:361px;top:252px" width="15" height="16" viewBox="0 0 17 19"><path d="M1.2 18 V7.3 Q1.2 6.2 2.3 6.2 H6 Q7 6.2 7.8 7.8" fill="none" stroke="#fff" stroke-width="1.4"/><path d="M0.5 11.5 H16.5 L14 18.5 H0.5 Z" fill="#fff"/><path d="M8 11.5 L11.3 5.8" stroke="#fff" stroke-width="2.4"/><path d="M10.3 0.8 Q8.8 4 10.6 6.2 Q12.6 7.6 15 6.4 Q16.8 5 16.3 2.5 L14.6 4 L12.9 3.5 L12.6 1.6 Z" fill="#fff"/></svg>
<div class="t" style="left:391.5px;top:251.90px;font-size:14.3px;color:#fff;font-family:'Liberation Sans',sans-serif;;">Résultat CBN / article</div>
<svg class="a" style="left:1864px;top:252px" width="23" height="14" viewBox="0 0 23 14"><path d="M0 7H18M12.5 1.5L18 7 12.5 12.5" stroke="#fff" stroke-width="1.6" fill="none"/><rect x="20.5" y="1" width="1.6" height="12" fill="#fff"/></svg>
<svg class="a" style="left:1896px;top:251px" width="15" height="16" viewBox="0 0 15 16"><path d="M7.5 0.5V11M2.5 6.5L7.5 11.5 12.5 6.5" stroke="#fff" stroke-width="1.6" fill="none"/><rect x="1" y="14" width="13" height="1.6" fill="#fff"/></svg>
<div class="a" style="left:348px;top:270px;width:1572px;height:114px;background:#fdfdfc;border:2px solid #747474;box-shadow:inset -2px 0 0 #fdfdfc"></div>
<div class="a" style="left:351px;top:274px;width:40px;height:22px;background:linear-gradient(#b5cdf0,#a3c0ec)"></div>
<svg class="a" style="left:375px;top:280px" width="12" height="12"><path d="M11 1V11H1z" fill="#e8eef8"/></svg>
<div class="a" style="left:391px;top:274px;width:312px;height:22px;background:linear-gradient(#f8d899,#f2c46f);border-bottom:1px solid #e7a64b"></div>
<div class="t" style="left:547.5px;top:278.24px;font-size:13.3px;color:#000;font-family:'Liberation Sans',sans-serif;;transform:translateX(-50%) scaleY(1.17);transform-origin:50% 11.26px;">Libellé</div>
<div class="a" style="left:703px;top:274px;width:111px;height:22px;background:linear-gradient(#fbfcfe,#dfe7f3);border-left:1px solid #c5d3e8;border-bottom:2px solid #f2b46a"></div>
<div class="t" style="left:759px;top:278.24px;font-size:13.3px;color:#000;font-family:'Liberation Sans',sans-serif;;transform:translateX(-50%) scaleY(1.17);transform-origin:50% 11.26px;">31/10/24</div>
<div class="a" style="left:814px;top:274px;width:412px;height:22px;background:linear-gradient(#fbfcfe,#dfe7f3);border-left:1px solid #a9bfe0;border-bottom:1px solid #a9bfe0;border-right:1px solid #c9d5e6"></div>
<div class="t" style="left:1020px;top:278.24px;font-size:13.3px;color:#000;font-family:'Liberation Sans',sans-serif;;transform:translateX(-50%) scaleY(1.17);transform-origin:50% 11.26px;">Informations</div>
<div class="a" style="left:351px;top:296px;width:40px;height:20px;background:#f4c97b"></div>
<div class="a" style="left:391px;top:296px;width:312px;height:20px;background:#efefef;border-bottom:1px solid #c9c9c9"></div>
<div class="a" style="left:703px;top:296px;width:111px;height:20px;background:#fdfdfd;border-left:1px solid #c9c9c9;border-bottom:1px solid #c9c9c9"></div>
<div class="a" style="left:814px;top:296px;width:412px;height:20px;background:#efefef;border-left:1px solid #c9c9c9;border-bottom:1px solid #c9c9c9;border-right:1px solid #8a8a8a"></div>
<div class="t" style="left:371px;top:300.24px;font-size:13.3px;color:#000;font-family:'Liberation Sans',sans-serif;;transform:translateX(-50%) scaleY(1.17);transform-origin:50% 11.26px;">1</div>
<div class="t" style="left:395.5px;top:299.74px;font-size:13.3px;color:#000;font-family:'Liberation Sans',sans-serif;;transform:scaleY(1.17);transform-origin:50% 11.26px;">Stock début de période</div>
<div class="t" style="left:706.5px;top:299.74px;font-size:13.3px;color:#000;font-family:'Liberation Sans',sans-serif;;transform:scaleY(1.17);transform-origin:50% 11.26px;">-26</div>
<div class="t" style="left:817.5px;top:299.74px;font-size:13.3px;color:#000;font-family:'Liberation Sans',sans-serif;;transform:scaleY(1.17);transform-origin:50% 11.26px;">A</div>
<div class="a" style="left:351px;top:316px;width:40px;height:20px;background:#e3eaf5;border-top:1px solid #a9bfe6"></div>
<div class="a" style="left:391px;top:316px;width:312px;height:20px;background:#efefef;border-bottom:1px solid #c9c9c9"></div>
<div class="a" style="left:703px;top:316px;width:111px;height:20px;background:#fdfdfd;border-left:1px solid #c9c9c9;border-bottom:1px solid #c9c9c9"></div>
<div class="a" style="left:814px;top:316px;width:412px;height:20px;background:#efefef;border-left:1px solid #c9c9c9;border-bottom:1px solid #c9c9c9;border-right:1px solid #8a8a8a"></div>
<div class="t" style="left:371px;top:320.24px;font-size:13.3px;color:#000;font-family:'Liberation Sans',sans-serif;;transform:translateX(-50%) scaleY(1.17);transform-origin:50% 11.26px;">2</div>
<div class="t" style="left:395.5px;top:319.74px;font-size:13.3px;color:#000;font-family:'Liberation Sans',sans-serif;;transform:scaleY(1.17);transform-origin:50% 11.26px;">Entrées prévues</div>
<div class="t" style="left:706.5px;top:319.74px;font-size:13.3px;color:#000;font-family:'Liberation Sans',sans-serif;;transform:scaleY(1.17);transform-origin:50% 11.26px;">1362</div>
<div class="t" style="left:817.5px;top:319.74px;font-size:13.3px;color:#000;font-family:'Liberation Sans',sans-serif;;transform:scaleY(1.17);transform-origin:50% 11.26px;">B</div>
<div class="a" style="left:351px;top:336px;width:40px;height:20px;background:#e3eaf5;border-top:1px solid #a9bfe6"></div>
<div class="a" style="left:391px;top:336px;width:312px;height:20px;background:#efefef;border-bottom:1px solid #c9c9c9"></div>
<div class="a" style="left:703px;top:336px;width:111px;height:20px;background:#fdfdfd;border-left:1px solid #c9c9c9;border-bottom:1px solid #c9c9c9"></div>
<div class="a" style="left:814px;top:336px;width:412px;height:20px;background:#efefef;border-left:1px solid #c9c9c9;border-bottom:1px solid #c9c9c9;border-right:1px solid #8a8a8a"></div>
<div class="t" style="left:371px;top:340.24px;font-size:13.3px;color:#000;font-family:'Liberation Sans',sans-serif;;transform:translateX(-50%) scaleY(1.17);transform-origin:50% 11.26px;">3</div>
<div class="t" style="left:395.5px;top:339.74px;font-size:13.3px;color:#000;font-family:'Liberation Sans',sans-serif;;transform:scaleY(1.17);transform-origin:50% 11.26px;">Sorties prévues</div>
<div class="t" style="left:706.5px;top:339.74px;font-size:13.3px;color:#000;font-family:'Liberation Sans',sans-serif;;transform:scaleY(1.17);transform-origin:50% 11.26px;">240</div>
<div class="t" style="left:817.5px;top:339.74px;font-size:13.3px;color:#000;font-family:'Liberation Sans',sans-serif;;transform:scaleY(1.17);transform-origin:50% 11.26px;">C</div>
<div class="a" style="left:351px;top:356px;width:40px;height:20px;background:#e3eaf5;border-top:1px solid #a9bfe6"></div>
<div class="a" style="left:391px;top:356px;width:312px;height:20px;background:#efefef;border-bottom:1px solid #c9c9c9"></div>
<div class="a" style="left:703px;top:356px;width:111px;height:20px;background:#fdfdfd;border-left:1px solid #c9c9c9;border-bottom:1px solid #c9c9c9"></div>
<div class="a" style="left:814px;top:356px;width:412px;height:20px;background:#efefef;border-left:1px solid #c9c9c9;border-bottom:1px solid #c9c9c9;border-right:1px solid #8a8a8a"></div>
<div class="t" style="left:371px;top:360.24px;font-size:13.3px;color:#000;font-family:'Liberation Sans',sans-serif;;transform:translateX(-50%) scaleY(1.17);transform-origin:50% 11.26px;">4</div>
<div class="t" style="left:395.5px;top:359.74px;font-size:13.3px;color:#000;font-family:'Liberation Sans',sans-serif;;transform:scaleY(1.17);transform-origin:50% 11.26px;">Stock projeté</div>
<div class="t" style="left:706.5px;top:359.74px;font-size:13.3px;color:#000;font-family:'Liberation Sans',sans-serif;;transform:scaleY(1.17);transform-origin:50% 11.26px;">1096</div>
<div class="t" style="left:817.5px;top:359.74px;font-size:13.3px;color:#000;font-family:'Liberation Sans',sans-serif;;transform:scaleY(1.17);transform-origin:50% 11.26px;">D = A + B - C</div>
<div class="a" style="left:351px;top:376px;width:40px;height:4px;background:#e3eaf5;border-top:1px solid #a9bfe6"></div>
<div class="a" style="left:391px;top:376px;width:312px;height:4px;background:#efefef"></div>
<div class="a" style="left:703px;top:376px;width:111px;height:4px;background:#fdfdfd;border-left:1px solid #c9c9c9"></div>
<div class="a" style="left:814px;top:376px;width:412px;height:4px;background:#efefef;border-left:1px solid #c9c9c9;border-right:1px solid #8a8a8a"></div>
<div class="a" style="left:391px;top:296px;width:313px;height:21px;border:2px solid #1b1b1b"></div>
<div class="a" style="left:1895px;top:274px;width:20px;height:106px;background:#e9ecf2;border:1px solid #6f7fa0"></div>
<div class="a" style="left:1896px;top:275px;width:18px;height:17px;background:linear-gradient(#f3f6fb,#d8e1ee);border-bottom:1px solid #7c8ca8"></div>
<svg class="a" style="left:1900px;top:282px" width="10" height="6"><path d="M0 6L5 0 10 6z" fill="#2f3848"/></svg>
<div class="a" style="left:1896px;top:292px;width:18px;height:44px;background:linear-gradient(90deg,#e3ebf6,#cbd9ee);border-bottom:1px solid #8ea5c8"></div>
<div class="a" style="left:1896px;top:336px;width:18px;height:23px;background:#8199c8"></div>
<div class="a" style="left:1896px;top:360px;width:18px;height:19px;background:linear-gradient(#f3f6fb,#d8e1ee);border-top:1px solid #7c8ca8"></div>
<svg class="a" style="left:1900px;top:367px" width="10" height="6"><path d="M0 0L5 6 10 0z" fill="#2f3848"/></svg>
<div class="a" style="left:355px;top:391px;width:109px;height:25px;background:#e5e5e5;border:1px solid #adadad"></div>
<svg class="a" style="left:380px;top:398px" width="15" height="12" viewBox="0 0 15 12"><path d="M1.5 6.5L5.5 10 13.5 1.5" stroke="#1fa3b3" stroke-width="3" fill="none"/></svg>
<div class="t" style="left:401px;top:397.91px;font-size:13.1px;color:#000;font-family:'Liberation Sans',sans-serif;;transform:scaleY(1.17);transform-origin:50% 11.09px;">Valider</div>
<div class="a" style="left:469px;top:391px;width:109px;height:25px;background:#e5e5e5;border:1px solid #adadad"></div>
<svg class="a" style="left:491px;top:397px" width="16" height="15" viewBox="0 0 16 15"><path d="M2 1.5L14 13.5M14 1.5L2 13.5" stroke="#e8532a" stroke-width="3.4"/></svg>
<div class="t" style="left:512.5px;top:397.91px;font-size:13.1px;color:#000;font-family:'Liberation Sans',sans-serif;;transform:scaleY(1.17);transform-origin:50% 11.09px;">Annuler</div>
<div class="a" style="left:583px;top:391px;width:109px;height:25px;background:#e5e5e5;border:1px solid #adadad"></div>
<div class="t" style="left:593.5px;top:397.61px;font-size:13.45px;color:#000;font-family:'Liberation Sans',sans-serif;;transform:scaleY(1.17);transform-origin:50% 11.39px;">Accès Gestion</div>
<div class="a" style="left:348px;top:421px;width:1569px;height:5px;background:#9a9a9a;border-top:1px solid #b0b0b0"></div>
<div class="a" style="left:348px;top:426px;width:67px;height:29px;background:#f0f0f0"></div>
<div class="a" style="left:413px;top:428px;width:2px;height:27px;background:#777"></div>
<div class="a" style="left:415px;top:453px;width:1503px;height:2px;background:#fdfdfc"></div>
<div class="t" style="left:355px;top:434.57px;font-size:13.5px;color:#1b1e29;font-family:'Liberation Sans',sans-serif;;transform:scaleY(1.17);transform-origin:50% 11.43px;">DETAIL</div>
<div class="a" style="left:359px;top:462px;width:983px;height:358px;border:1px solid #a0a0a0;box-shadow:inset 1px 1px 0 #fdfdfd, 1px 1px 0 #fdfdfd"></div>
<div class="t" style="right:1451px;top:476.24px;font-size:13.3px;color:#000;font-family:'Liberation Sans',sans-serif;;transform:scaleY(1.17);transform-origin:50% 11.26px;">Unité Prod</div>
<div class="t" style="left:483px;top:476.24px;font-size:13.3px;color:#2176e6;font-family:'Liberation Sans',sans-serif;;transform:scaleY(1.17);transform-origin:50% 11.26px;">U1</div>
<div class="t" style="right:1189.5px;top:476.24px;font-size:13.3px;color:#000;font-family:'Liberation Sans',sans-serif;;transform:scaleY(1.17);transform-origin:50% 11.26px;">CBN</div>
<div class="t" style="left:745.5px;top:476.24px;font-size:13.3px;color:#2176e6;font-family:'Liberation Sans',sans-serif;;transform:scaleY(1.17);transform-origin:50% 11.26px;">CBN-U1</div>
<div class="t" style="right:943px;top:476.24px;font-size:13.3px;color:#000;font-family:'Liberation Sans',sans-serif;;transform:scaleY(1.17);transform-origin:50% 11.26px;">Dernier calcul</div>
<div class="t" style="left:990.5px;top:475.82px;font-size:13.8px;color:#2176e6;font-family:'Liberation Sans',sans-serif;;transform:scaleY(1.17);transform-origin:50% 11.68px;">31/10/24 01:00:07</div>
<div class="t" style="right:670px;top:478.74px;font-size:13.3px;color:#000;font-family:'Liberation Sans',sans-serif;;transform:scaleY(1.17);transform-origin:50% 11.26px;">Statut</div>
<div class="t" style="left:1265px;top:478.74px;font-size:13.3px;color:#2176e6;font-family:'Liberation Sans',sans-serif;;transform:scaleY(1.17);transform-origin:50% 11.26px;">OK</div>
<div class="t" style="left:370.5px;top:506.73px;font-size:14.2px;color:#000;font-family:'Liberation Sans',sans-serif;font-weight:bold;letter-spacing:0.5px;transform:scaleY(1.1);transform-origin:50% 12.02px;">CARACTERISTIQUES ARTICLE</div>
<div class="t" style="right:1451px;top:538.24px;font-size:13.3px;color:#000;font-family:'Liberation Sans',sans-serif;;transform:scaleY(1.17);transform-origin:50% 11.26px;">Article</div>
<div class="t" style="left:483px;top:538.24px;font-size:13.3px;color:#2176e6;font-family:'Liberation Sans',sans-serif;;transform:scaleY(1.17);transform-origin:50% 11.26px;">06500</div>
<div class="t" style="right:1038.5px;top:538.44px;font-size:13.3px;color:#000;font-family:'Liberation Sans',sans-serif;;transform:scaleY(1.17);transform-origin:50% 11.26px;">Stock Physique</div>
<div class="a" style="left:896px;top:544px;width:7px;height:2px;background:#2176e6"></div>
<div class="t" style="left:939px;top:539.31px;font-size:12px;color:#2176e6;font-family:'Liberation Mono',monospace;letter-spacing:1.4px;transform:scaleY(1.14);transform-origin:50% 9.19px;">26,000</div>
<div class="t" style="right:709.5px;top:539.04px;font-size:13.3px;color:#000;font-family:'Liberation Sans',sans-serif;;transform:scaleY(1.17);transform-origin:50% 11.26px;">Couverture (J)</div>
<div class="t" style="left:1268.5px;top:539.31px;font-size:12px;color:#2176e6;font-family:'Liberation Mono',monospace;letter-spacing:1.4px;transform:scaleY(1.14);transform-origin:50% 9.19px;">0,00</div>
<div class="t" style="right:1451px;top:564.74px;font-size:13.3px;color:#000;font-family:'Liberation Sans',sans-serif;;transform:scaleY(1.17);transform-origin:50% 11.26px;">Désignation</div>
<div class="a" style="left:479px;top:560px;width:845px;height:79px;background:#f0f0f0;border:1px solid #6e6e6e;border-right-color:#b4b4b4;border-bottom-color:#b4b4b4;box-shadow:inset 1px 1px 0 #fbfbfb"></div>
<div class="a" style="left:1301px;top:562px;width:21px;height:75px;background:#f0f0f0;border-left:1px solid #e6e6e6"></div>
<svg class="a" style="left:1305px;top:569px" width="12" height="8"><path d="M1 7L6 2 11 7" stroke="#b0b0b0" stroke-width="1.6" fill="none"/></svg>
<svg class="a" style="left:1305px;top:622px" width="12" height="8"><path d="M1 1L6 6 11 1" stroke="#b0b0b0" stroke-width="1.6" fill="none"/></svg>
<div class="t" style="left:482.5px;top:565.74px;font-size:13.3px;color:#2176e6;font-family:'Liberation Sans',sans-serif;;transform:scaleY(1.17);transform-origin:50% 11.26px;">Joue 28 profil talon 95 sans patte dodécagone 4viS</div>
<div class="t" style="right:1452px;top:646.14px;font-size:13.3px;color:#000;font-family:'Liberation Sans',sans-serif;;transform:scaleY(1.17);transform-origin:50% 11.26px;">Origine prin.</div>
<div class="t" style="right:1452px;top:669.14px;font-size:13.3px;color:#000;font-family:'Liberation Sans',sans-serif;;transform:scaleY(1.17);transform-origin:50% 11.26px;">Un. Mes. Stock</div>
<div class="t" style="right:1452px;top:693.14px;font-size:13.3px;color:#000;font-family:'Liberation Sans',sans-serif;;transform:scaleY(1.17);transform-origin:50% 11.26px;">Stock Sécurité</div>
<div class="t" style="right:1452px;top:714.74px;font-size:13.3px;color:#000;font-family:'Liberation Sans',sans-serif;;transform:scaleY(1.17);transform-origin:50% 11.26px;">Qte Mini Appro</div>
<div class="t" style="right:1452px;top:738.14px;font-size:13.3px;color:#000;font-family:'Liberation Sans',sans-serif;;transform:scaleY(1.17);transform-origin:50% 11.26px;">Qte Mul. Appro</div>
<div class="t" style="right:1452px;top:762.24px;font-size:13.3px;color:#000;font-family:'Liberation Sans',sans-serif;;transform:scaleY(1.17);transform-origin:50% 11.26px;">Délai Appro.</div>
<div class="t" style="right:1452px;top:785.44px;font-size:13.3px;color:#000;font-family:'Liberation Sans',sans-serif;;transform:scaleY(1.17);transform-origin:50% 11.26px;">Regroup. dem.</div>
<div class="t" style="left:482.5px;top:646.14px;font-size:13.3px;color:#2176e6;font-family:'Liberation Sans',sans-serif;;transform:scaleY(1.17);transform-origin:50% 11.26px;">A</div>
<div class="t" style="left:483px;top:669.14px;font-size:13.3px;color:#2176e6;font-family:'Liberation Sans',sans-serif;;transform:scaleY(1.17);transform-origin:50% 11.26px;">Un</div>
<div class="t" style="left:535.5px;top:694.31px;font-size:12px;color:#2176e6;font-family:'Liberation Mono',monospace;letter-spacing:1.4px;transform:scaleY(1.14);transform-origin:50% 9.19px;">0,000</div>
<div class="t" style="left:535.5px;top:715.81px;font-size:12px;color:#2176e6;font-family:'Liberation Mono',monospace;letter-spacing:1.4px;transform:scaleY(1.14);transform-origin:50% 9.19px;">0,000</div>
<div class="t" style="left:535.5px;top:739.31px;font-size:12px;color:#2176e6;font-family:'Liberation Mono',monospace;letter-spacing:1.4px;transform:scaleY(1.14);transform-origin:50% 9.19px;">0,000</div>
<div class="t" style="left:500.5px;top:763.11px;font-size:12px;color:#2176e6;font-family:'Liberation Mono',monospace;;transform:scaleY(1.14);transform-origin:50% 9.19px;">0</div>
<div class="t" style="left:613.5px;top:645.64px;font-size:13.3px;color:#000;font-family:'Liberation Sans',sans-serif;;transform:scaleY(1.17);transform-origin:50% 11.26px;">&lt;=</div>
<div class="t" style="left:641.5px;top:645.81px;font-size:13.1px;color:#000;font-family:'Liberation Sans',sans-serif;;transform:scaleY(1.17);transform-origin:50% 11.09px;">Info article (DDArtic.GenOriPrin)</div>
<div class="t" style="left:613.5px;top:668.34px;font-size:13.3px;color:#000;font-family:'Liberation Sans',sans-serif;;transform:scaleY(1.17);transform-origin:50% 11.26px;">&lt;=</div>
<div class="t" style="left:641.5px;top:668.51px;font-size:13.1px;color:#000;font-family:'Liberation Sans',sans-serif;;transform:scaleY(1.17);transform-origin:50% 11.09px;">Info article (DDArtic.StoUnMeQte)</div>
<div class="t" style="left:613.5px;top:692.74px;font-size:13.3px;color:#000;font-family:'Liberation Sans',sans-serif;;transform:scaleY(1.17);transform-origin:50% 11.26px;">&lt;=</div>
<div class="t" style="left:641.5px;top:692.91px;font-size:13.1px;color:#000;font-family:'Liberation Sans',sans-serif;;transform:scaleY(1.17);transform-origin:50% 11.09px;">Info article (DDArtic.StoQteSecu)</div>
<div class="t" style="left:613.5px;top:715.94px;font-size:13.3px;color:#000;font-family:'Liberation Sans',sans-serif;;transform:scaleY(1.17);transform-origin:50% 11.26px;">&lt;=</div>
<div class="t" style="left:641.5px;top:716.11px;font-size:13.1px;color:#000;font-family:'Liberation Sans',sans-serif;;transform:scaleY(1.17);transform-origin:50% 11.09px;">Info article (DDArtic.AppQteMin)</div>
<div class="t" style="left:613.5px;top:740.04px;font-size:13.3px;color:#000;font-family:'Liberation Sans',sans-serif;;transform:scaleY(1.17);transform-origin:50% 11.26px;">&lt;=</div>
<div class="t" style="left:641.5px;top:740.21px;font-size:13.1px;color:#000;font-family:'Liberation Sans',sans-serif;;transform:scaleY(1.17);transform-origin:50% 11.09px;">Info article (DDArtic.AppQteMul)</div>
<div class="t" style="left:613.5px;top:763.14px;font-size:13.3px;color:#000;font-family:'Liberation Sans',sans-serif;;transform:scaleY(1.17);transform-origin:50% 11.26px;">&lt;=</div>
<div class="t" style="left:641.5px;top:763.31px;font-size:13.1px;color:#000;font-family:'Liberation Sans',sans-serif;;transform:scaleY(1.17);transform-origin:50% 11.09px;">Info article (DDArtic.AppAppCyc)</div>
<div class="a" style="left:479px;top:781px;width:847px;height:22px;background:#f0f0f0;border:1px solid #6e6e6e;border-right-color:#b4b4b4;border-bottom-color:#9a9a9a;box-shadow:inset 1px 1px 0 #fbfbfb"></div>
<div class="t" style="left:482.5px;top:785.74px;font-size:13.3px;color:#2176e6;font-family:'Liberation Sans',sans-serif;;transform:scaleY(1.17);transform-origin:50% 11.26px;">Aucun</div>
<div class="t" style="left:1355px;top:470.44px;font-size:13.3px;color:#000;font-family:'Liberation Sans',sans-serif;;transform:scaleY(1.17);transform-origin:50% 11.26px;">Tracabilité</div>
<div class="a" style="left:1425px;top:466px;width:470px;height:492px;background:#fdfdfc;border-left:2px solid #6e6e6e;border-top:2px solid #6e6e6e"></div>
<div class="a" style="left:1427px;top:468px;width:40px;height:39px;background:linear-gradient(#b5cdf0,#a3c0ec)"></div>
<svg class="a" style="left:1452px;top:492px" width="12" height="12"><path d="M11 1V11H1z" fill="#e8eef8"/></svg>
<div class="a" style="left:1467px;top:468px;width:92px;height:39px;background:linear-gradient(#f8d899,#f2c46f);border-bottom:1px solid #e7a64b"></div>
<div class="t" style="left:1513px;top:482.24px;font-size:13.3px;color:#000;font-family:'Liberation Sans',sans-serif;;transform:translateX(-50%) scaleY(1.17);transform-origin:50% 11.26px;">Type entité</div>
<div class="a" style="left:1559px;top:468px;width:162px;height:39px;background:linear-gradient(#fbfcfe,#dfe7f3);border-left:1px solid #c5d3e8;border-bottom:1px solid #a9bfe0"></div>
<div class="t" style="left:1640px;top:482.24px;font-size:13.3px;color:#000;font-family:'Liberation Sans',sans-serif;;transform:translateX(-50%) scaleY(1.17);transform-origin:50% 11.26px;">Clés entité</div>
<div class="a" style="left:1721px;top:468px;width:61px;height:39px;background:linear-gradient(#fbfcfe,#dfe7f3);border-left:1px solid #a9bfe0;border-bottom:1px solid #a9bfe0"></div>
<div class="t" style="left:1751.5px;top:473.24px;font-size:13.3px;color:#000;font-family:'Liberation Sans',sans-serif;;transform:translateX(-50%) scaleY(1.17);transform-origin:50% 11.26px;">Quantité</div>
<div class="t" style="left:1751.5px;top:489.74px;font-size:13.3px;color:#000;font-family:'Liberation Sans',sans-serif;;transform:translateX(-50%) scaleY(1.17);transform-origin:50% 11.26px;">besoin</div>
<div class="a" style="left:1782px;top:468px;width:110px;height:39px;background:linear-gradient(#fbfcfe,#dfe7f3);border-left:1px solid #a9bfe0;border-bottom:1px solid #a9bfe0"></div>
<div class="t" style="left:1821px;top:482.24px;font-size:13.3px;color:#000;font-family:'Liberation Sans',sans-serif;;transform:scaleY(1.17);transform-origin:50% 11.26px;">Information</div>
<div class="a" style="left:1892px;top:462px;width:21px;height:497px;background:#f0f0f0"></div>
<svg class="a" style="left:1896px;top:464px" width="12" height="8"><path d="M1 7L6 2 11 7" stroke="#3b3b3b" stroke-width="1.8" fill="none"/></svg>
<div class="a" style="left:1893px;top:478px;width:19px;height:354px;background:#c8c8c8"></div>
<svg class="a" style="left:1896px;top:944px" width="12" height="8"><path d="M1 1L6 6 11 1" stroke="#3b3b3b" stroke-width="1.8" fill="none"/></svg>
<div class="t" style="right:1454px;top:852.74px;font-size:13.3px;color:#000;font-family:'Liberation Sans',sans-serif;;transform:scaleY(1.17);transform-origin:50% 11.26px;">Alerte / Erreur</div>
<div class="a" style="left:475px;top:848px;width:867px;height:111px;background:#fdfdfc;border:2px solid #6e6e6e;border-bottom:none;border-right-color:#6e6e6e"></div>
<div class="a" style="left:477px;top:850px;width:40px;height:22px;background:linear-gradient(#b5cdf0,#a3c0ec)"></div>
<svg class="a" style="left:502px;top:858px" width="12" height="12"><path d="M11 1V11H1z" fill="#e8eef8"/></svg>
<div class="a" style="left:517px;top:850px;width:72px;height:22px;background:linear-gradient(#f8d899,#f2c46f);border-bottom:1px solid #e7a64b"></div>
<div class="t" style="left:553.5px;top:854.74px;font-size:13.3px;color:#000;font-family:'Liberation Sans',sans-serif;;transform:translateX(-50%) scaleY(1.17);transform-origin:50% 11.26px;">Type</div>
<div class="a" style="left:589px;top:850px;width:632px;height:22px;background:linear-gradient(#fbfcfe,#dfe7f3);border-left:1px solid #a9bfe0;border-bottom:1px solid #a9bfe0;border-right:1px solid #a9bfe0"></div>
<div class="t" style="left:905px;top:854.74px;font-size:13.3px;color:#000;font-family:'Liberation Sans',sans-serif;;transform:translateX(-50%) scaleY(1.17);transform-origin:50% 11.26px;">Libellé</div>
<div class="a" style="left:356px;top:959px;width:1536px;height:20px;background:#f0f0f0"></div>
<svg class="a" style="left:359px;top:964px" width="9" height="11"><path d="M7 1L2 5.5 7 10" stroke="#3b3b3b" stroke-width="1.8" fill="none"/></svg>
<div class="a" style="left:375px;top:960px;width:1026px;height:18px;background:#c8c8c8"></div>
<svg class="a" style="left:1877px;top:964px" width="9" height="11"><path d="M2 1L7 5.5 2 10" stroke="#3b3b3b" stroke-width="1.8" fill="none"/></svg>
<div class="a" style="left:348px;top:453px;width:1570px;height:534px;border-right:2px solid #6e6e6e;border-bottom:2px solid #6e6e6e"></div>
<div class="a" style="left:355px;top:994px;width:88px;height:25px;background:#d2d2d2;border:1px solid #cbcbcb"></div>
<svg class="a" style="left:370px;top:1001px" width="13" height="10" viewBox="0 0 13 10"><path d="M1 5.5L4.5 8.5 12 1" stroke="#c2c2c2" stroke-width="2.6" fill="none"/></svg>
<div class="t" style="left:389.8px;top:999.91px;font-size:13.1px;color:#5a5a5a;font-family:'Liberation Sans',sans-serif;;transform:scaleY(1.17);transform-origin:50% 11.09px;">Valider</div>
<div class="a" style="left:447px;top:994px;width:88px;height:25px;background:#e5e5e5;border:1px solid #adadad"></div>
<svg class="a" style="left:458px;top:999px" width="16" height="15" viewBox="0 0 16 15"><path d="M2 1.5L14 13.5M14 1.5L2 13.5" stroke="#e8532a" stroke-width="3.4"/></svg>
<div class="t" style="left:480px;top:999.91px;font-size:13.1px;color:#000;font-family:'Liberation Sans',sans-serif;;transform:scaleY(1.17);transform-origin:50% 11.09px;">Annuler</div>
<div class="a" style="left:1909px;top:1036px;width:2px;height:2px;background:#6f86c4;z-index:5"></div>
<div class="a" style="left:1905px;top:1040px;width:2px;height:2px;background:#6f86c4;z-index:5"></div>
<div class="a" style="left:1909px;top:1040px;width:2px;height:2px;background:#6f86c4;z-index:5"></div>
<div class="a" style="left:1901px;top:1044px;width:2px;height:2px;background:#6f86c4;z-index:5"></div>
<div class="a" style="left:1905px;top:1044px;width:2px;height:2px;background:#6f86c4;z-index:5"></div>
<div class="a" style="left:1909px;top:1044px;width:2px;height:2px;background:#6f86c4;z-index:5"></div>
<div class="a" style="left:1273px;top:701px;width:96px;height:96px;border-radius:50%;background:rgba(250,248,40,0.92)"></div>
<svg class="a" style="left:1318px;top:749px" width="30" height="42" viewBox="0 0 30 42"><path d="M2 2 L2 33 L9.5 26 L15 38 L20 35.5 L14.5 24 L24.5 24 Z" fill="#fff" stroke="#000" stroke-width="2" stroke-linejoin="round"/></svg><!--/MAIN-->
<div class="a" id="status"></div>
<div class="a" id="bottom"></div>
</body></html>
